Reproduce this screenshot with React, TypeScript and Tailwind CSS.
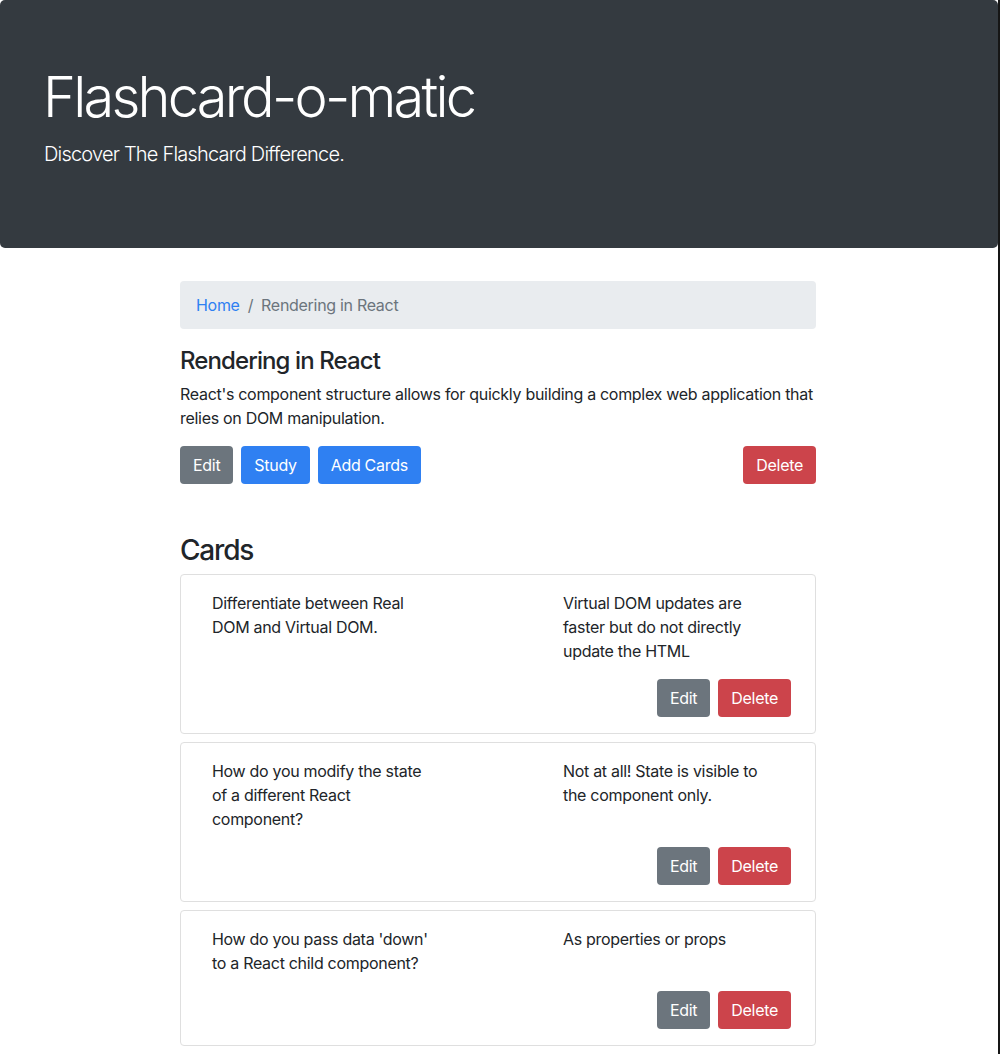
import React from 'react';

interface FlashCard {
  id: number;
  front: string;
  back: string;
}

const cards: FlashCard[] = [
  {
    id: 1,
    front: 'Differentiate between Real DOM and Virtual DOM.',
    back: 'Virtual DOM updates are faster but do not directly update the HTML',
  },
  {
    id: 2,
    front: 'How do you modify the state of a different React component?',
    back: 'Not at all! State is visible to the component only.',
  },
  {
    id: 3,
    front: "How do you pass data 'down' to a React child component?",
    back: 'As properties or props',
  },
];

const btn = 'h-[38px] px-[13px] rounded-[4px] text-white text-base leading-6';
const gray = `${btn} bg-[#6c757d]`;
const blue = `${btn} bg-[#2f80f2]`;
const red = `${btn} bg-[#cc444b]`;

function CardItem({ card }: { card: FlashCard }) {
  return (
    <div className="border border-[#dfdfdf] rounded-[4px] pl-[31px] pr-[24px] pt-4 pb-4">
      <div className="flex">
        <p className="w-[220px]">{card.front}</p>
        <p className="w-[220px] ml-[131px]">{card.back}</p>
      </div>
      <div className="flex justify-end gap-2 mt-4">
        <button className={gray}>Edit</button>
        <button className={red}>Delete</button>
      </div>
    </div>
  );
}

export default function App() {
  return (
    <div className="flex min-h-[1054px] bg-white text-[#212529] text-base leading-6 tracking-[-0.3px] font-['Inter',sans-serif]">
      <div className="w-[998px]">
        <header className="bg-[#343a40] rounded-[5px] h-[248px] pl-[44px] pt-16 text-white">
          <h1 className="text-[56px] leading-[1.2] font-light mb-2 tracking-[-2.8px] -ml-[1px]">Flashcard-o-matic</h1>
          <p className="text-xl leading-[30px] font-light tracking-[-0.8px]">Discover The Flashcard Difference.</p>
        </header>

        <main className="w-[636px] ml-[180px] pt-[33px]">
          <nav className="bg-[#e9ecef] rounded-[4px] h-12 px-4 flex items-center">
            <a className="text-[#2f80f2]">Home</a>
            <span className="px-2 text-[#6c757d]">/</span>
            <span className="text-[#6c757d]">Rendering in React</span>
          </nav>

          <h4 className="mt-[18px] mb-[6px] text-2xl leading-[1.2] font-medium tracking-[-0.9px]">Rendering in React</h4>
          <p>
            React's component structure allows for quickly building a complex web application that relies on DOM manipulation.
          </p>
          <div className="flex gap-2 mt-4">
            <button className={gray}>Edit</button>
            <button className={blue}>Study</button>
            <button className={blue}>Add Cards</button>
            <button className={`${red} ml-auto`}>Delete</button>
          </div>

          <h3 className="mt-[50px] mb-[7px] text-[28px] leading-[1.2] font-medium tracking-[-1.2px]">Cards</h3>
          <div className="flex flex-col gap-2">
            {cards.map((c) => (
              <CardItem key={c.id} card={c} />
            ))}
          </div>
        </main>
      </div>
      <div className="w-[2px] bg-[#161616]" />
    </div>
  );
}
